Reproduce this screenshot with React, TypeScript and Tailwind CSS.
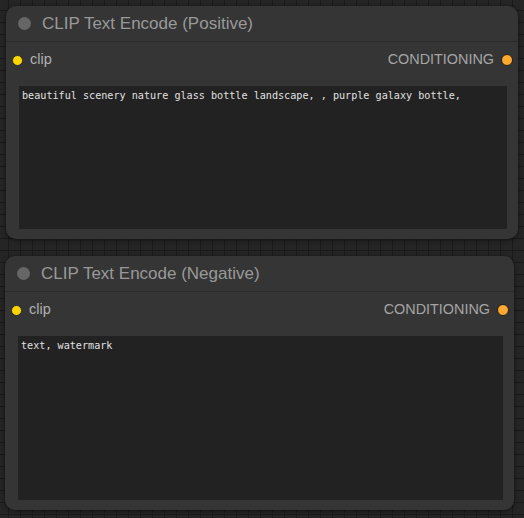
const sans = "font-['Liberation_Sans',Arial,sans-serif]";

function Slot() {
  return (
    <div className="flex items-center justify-between h-[34px]">
      <div className="flex items-center gap-[7px]">
        <span className="w-[11px] h-[11px] rounded-full bg-[#ffd500] border border-[#2a2a2a]" />
        <span className={`${sans} text-[14.5px] text-[#b0b0b0]`}>clip</span>
      </div>
      <div className="flex items-center gap-[7px]">
        <span className={`${sans} text-[14.4px] text-[#a5a5a5]`}>CONDITIONING</span>
        <span className="w-[12px] h-[12px] rounded-full bg-[#ffa931] border border-[#1e1e1e]" />
      </div>
    </div>
  );
}

function Node({
  title,
  text,
  wrap,
  boxH,
}: {
  title: string;
  text: string;
  wrap: string;
  boxH: string;
}) {
  return (
    <div className={`rounded-[10px] bg-[#353535] shadow-[0_1px_4px_rgba(0,0,0,0.55)] ${wrap}`}>
      <div className="flex items-center h-[36px] px-[12px] gap-[11px] border-b border-[#2b2b2b]">
        <span className="w-[13px] h-[13px] rounded-full bg-[#666666]" />
        <span className={`${sans} text-[17px] text-[#999999]`}>{title}</span>
      </div>
      <div className="pl-[6px] pr-[5px] pt-[1px]">
        <Slot />
      </div>
      <div className="pl-[13px] pr-[11px] pt-[9px] pb-[10px]">
        <div
          className={`bg-[#222222] ${boxH} px-[3px] pt-[2px] font-['DejaVu_Sans_Mono',monospace] text-[10.15px] leading-[16px] text-[#e0e0e0] whitespace-pre`}
        >
          {text}
        </div>
      </div>
    </div>
  );
}

export default function App() {
  return (
    <div className="w-[524px] h-[518px] overflow-hidden bg-[#252525] bg-[linear-gradient(#1a1a1a_1px,transparent_1px),linear-gradient(90deg,#1a1a1a_1px,transparent_1px)] bg-[size:12px_12px] bg-[position:-4px_-2px] pt-[6px] flex flex-col gap-[17px]">
      <Node
        title="CLIP Text Encode (Positive)"
        text="beautiful scenery nature glass bottle landscape, , purple galaxy bottle,"
        wrap="ml-[6px] w-[512px]"
        boxH="h-[143px]"
      />
      <Node
        title="CLIP Text Encode (Negative)"
        text="text, watermark"
        wrap="ml-[5px] w-[509px]"
        boxH="h-[164px]"
      />
    </div>
  );
}
